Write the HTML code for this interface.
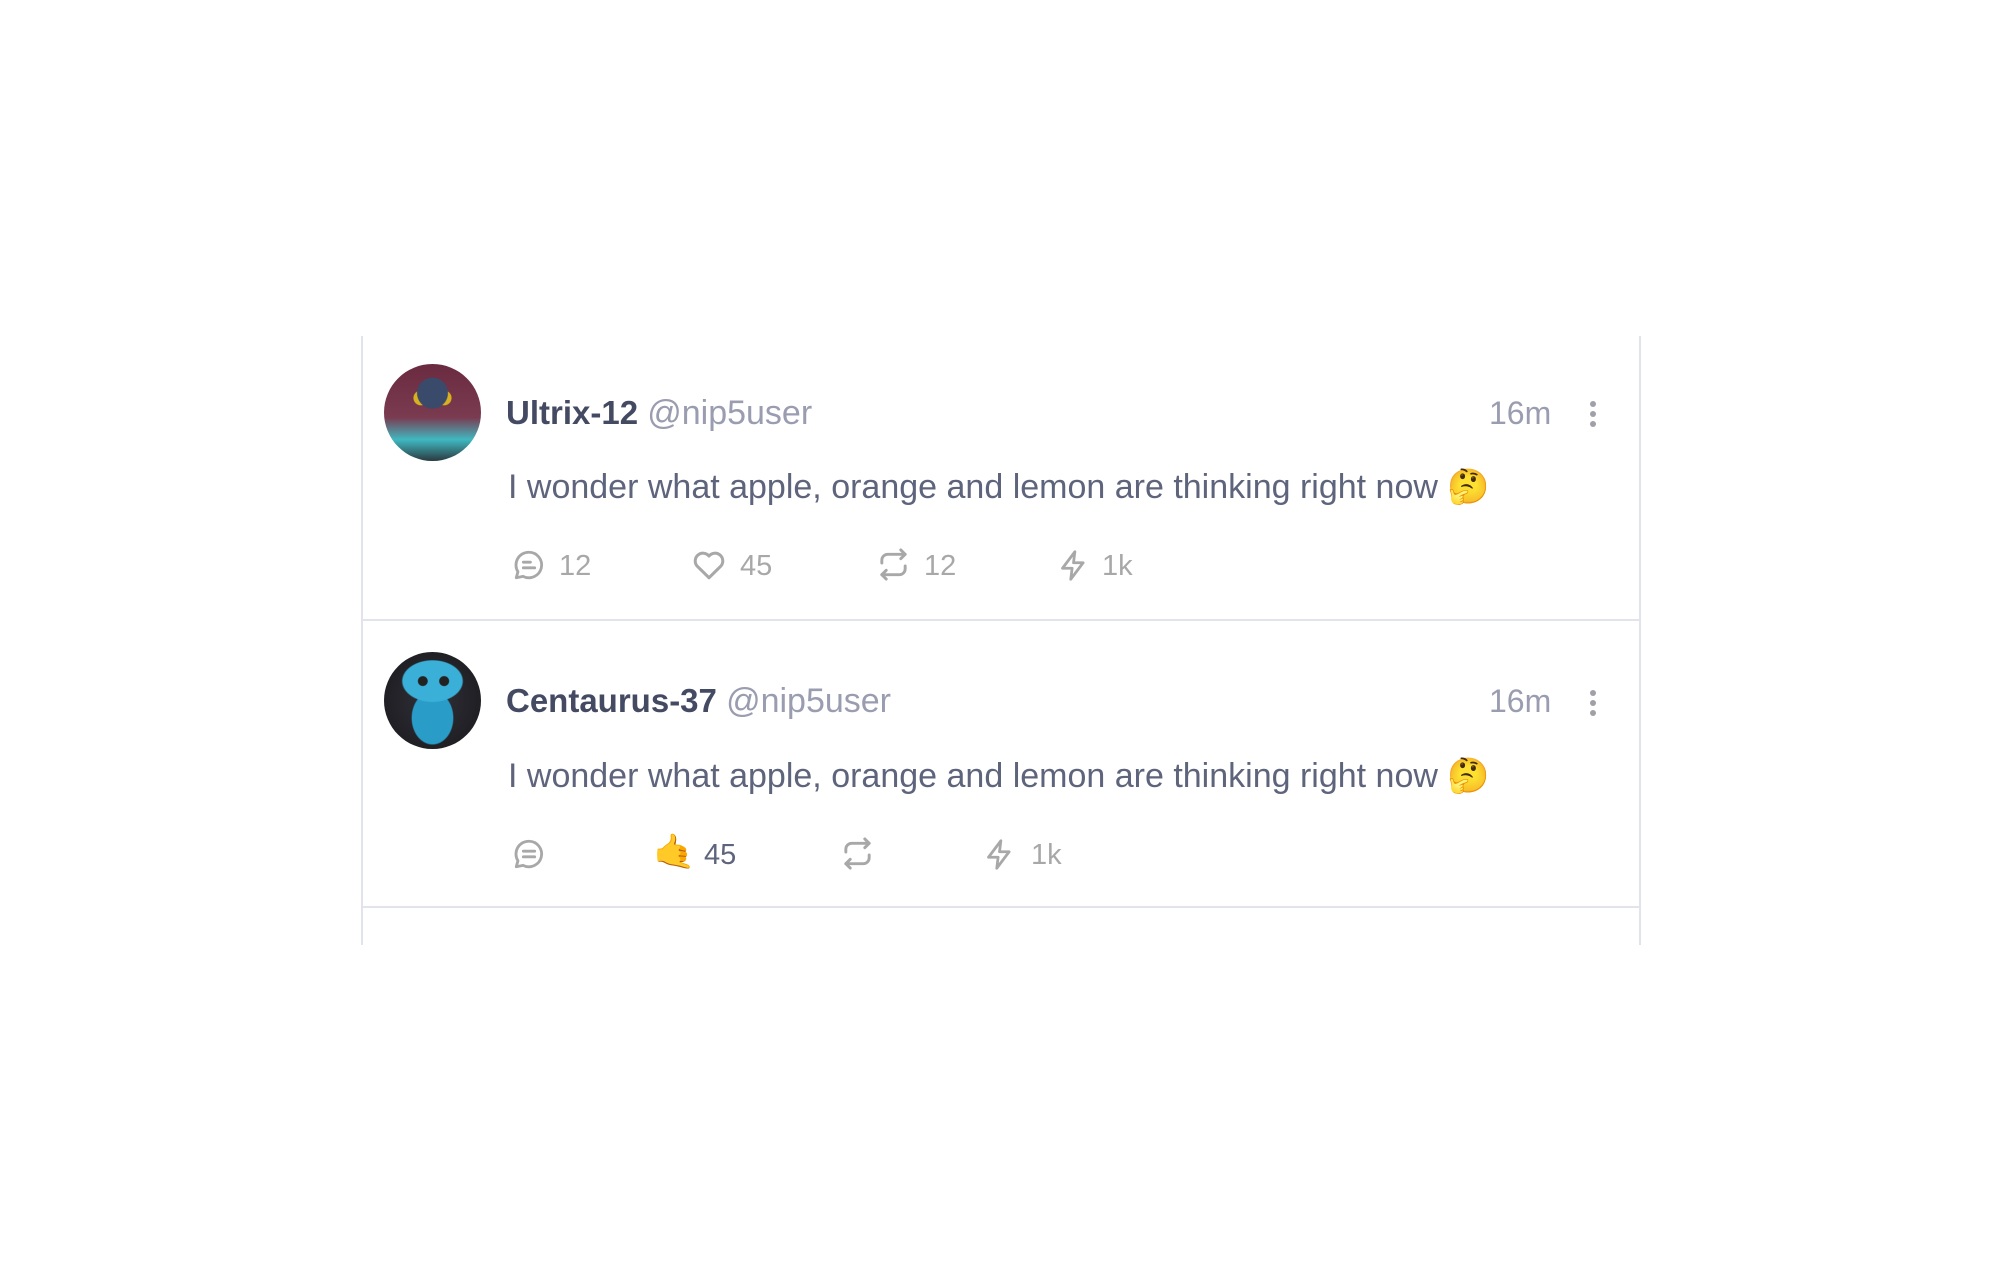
<!DOCTYPE html>
<html><head><meta charset="utf-8"><style>
body{margin:0;width:2000px;height:1274px;background:#fff;position:relative;overflow:hidden;font-family:"Liberation Sans",sans-serif}
.a{position:absolute;white-space:nowrap}
.card{position:absolute;left:361px;top:336px;height:609px;border-left:2px solid #e2e4ec;border-right:2px solid #e2e4ec;box-sizing:border-box;width:1280px}
.div{position:absolute;left:361px;width:1280px;height:2px;background:#e2e4ec}
.av{position:absolute;width:97px;height:97px;border-radius:50%;overflow:hidden}
.name{font-size:33px;font-weight:bold;color:#454a63;line-height:40px}
.h{font-weight:normal;color:#9a9db0;font-size:34px}
.t{font-size:34px;color:#5e647c;line-height:40px}
.tm{font-size:32px;color:#9a9db0;line-height:40px}
.n{font-size:29px;color:#a8a8a8;line-height:30px}
svg.i{position:absolute;fill:none;stroke:#a8a8a8;stroke-width:2;stroke-linecap:round;stroke-linejoin:round}
.dots{position:absolute;width:6px}
.dots i{display:block;width:6px;height:6px;border-radius:50%;background:#a0a0a8;margin-bottom:4px}
</style></head><body>
<div class="card"></div>
<div class="div" style="top:619px"></div>
<div class="div" style="top:906px"></div>

<!-- post 1 -->
<div class="av" style="left:384px;top:364px;background:radial-gradient(circle at 50% 30%,#3a4a6a 0 18%,transparent 19%),radial-gradient(circle at 38% 35%,#d8b020 0 8%,transparent 9%),radial-gradient(circle at 62% 35%,#d8b020 0 8%,transparent 9%),linear-gradient(180deg,#6a2a40 0%,#7a3a50 55%,#40b8c0 78%,#2a3a40 100%)"></div>
<div class="a name" style="left:506px;top:393px">Ultrix-12 <span class="h">@nip5user</span></div>
<div class="a tm" style="left:1489px;top:393px">16m</div>
<div class="dots" style="left:1590px;top:401px"><i></i><i></i><i></i></div>
<div class="a t" style="left:508px;top:467px">I wonder what apple, orange and lemon are thinking right now 🤔</div>

<svg class="i" style="left:512px;top:548px" width="34" height="34" viewBox="0 0 24 24"><path d="M12 3a9 9 0 1 1-4.2 17L3 21l1.2-4.2A9 9 0 0 1 12 3z"/><path d="M8 10h5M8 14h8"/></svg>
<div class="a n" style="left:559px;top:551px">12</div>
<svg class="i" style="left:691px;top:547px" width="36" height="36" viewBox="0 0 24 24"><path d="M12 20.5 4 12.6A4.8 4.8 0 0 1 12 6a4.8 4.8 0 0 1 8 6.6z"/></svg>
<div class="a n" style="left:740px;top:551px">45</div>
<svg class="i" style="left:876px;top:547px" width="35" height="35" viewBox="0 0 24 24"><path d="M17 2l3 3-3 3"/><path d="M4 11V9a4 4 0 0 1 4-4h12"/><path d="M7 22l-3-3 3-3"/><path d="M20 13v2a4 4 0 0 1-4 4H4"/></svg>
<div class="a n" style="left:924px;top:551px">12</div>
<svg class="i" style="left:1057px;top:547px" width="33" height="37" viewBox="0 0 24 24"><path d="M13 2 4 14h7l-1 8 9-12h-7z"/></svg>
<div class="a n" style="left:1102px;top:551px">1k</div>

<!-- post 2 -->
<div class="av" style="left:384px;top:652px;background:radial-gradient(circle at 40% 30%,#222 0 5%,transparent 6%),radial-gradient(circle at 62% 30%,#222 0 5%,transparent 6%),radial-gradient(ellipse 32% 22% at 50% 30%,#3ab0d8 0 95%,transparent 100%),radial-gradient(ellipse 22% 28% at 50% 68%,#2a9cc8 0 95%,transparent 100%),radial-gradient(circle at 50% 50%,#303038 0%,#18181c 100%)"></div>
<div class="a name" style="left:506px;top:681px">Centaurus-37 <span class="h">@nip5user</span></div>
<div class="a tm" style="left:1489px;top:681px">16m</div>
<div class="dots" style="left:1590px;top:690px"><i></i><i></i><i></i></div>
<div class="a t" style="left:508px;top:756px">I wonder what apple, orange and lemon are thinking right now 🤔</div>

<svg class="i" style="left:512px;top:837px" width="34" height="34" viewBox="0 0 24 24"><path d="M12 3a9 9 0 1 1-4.2 17L3 21l1.2-4.2A9 9 0 0 1 12 3z"/><path d="M8 10h8M8 14h8"/></svg>
<div class="a" style="left:653px;top:832px;font-size:34px;line-height:40px">🤙</div>
<div class="a n" style="left:704px;top:840px;color:#5e647c">45</div>
<svg class="i" style="left:840px;top:836px" width="35" height="35" viewBox="0 0 24 24"><path d="M17 2l3 3-3 3"/><path d="M4 11V9a4 4 0 0 1 4-4h12"/><path d="M7 22l-3-3 3-3"/><path d="M20 13v2a4 4 0 0 1-4 4H4"/></svg>
<svg class="i" style="left:983px;top:836px" width="33" height="37" viewBox="0 0 24 24"><path d="M13 2 4 14h7l-1 8 9-12h-7z"/></svg>
<div class="a n" style="left:1031px;top:840px">1k</div>
</body></html>
